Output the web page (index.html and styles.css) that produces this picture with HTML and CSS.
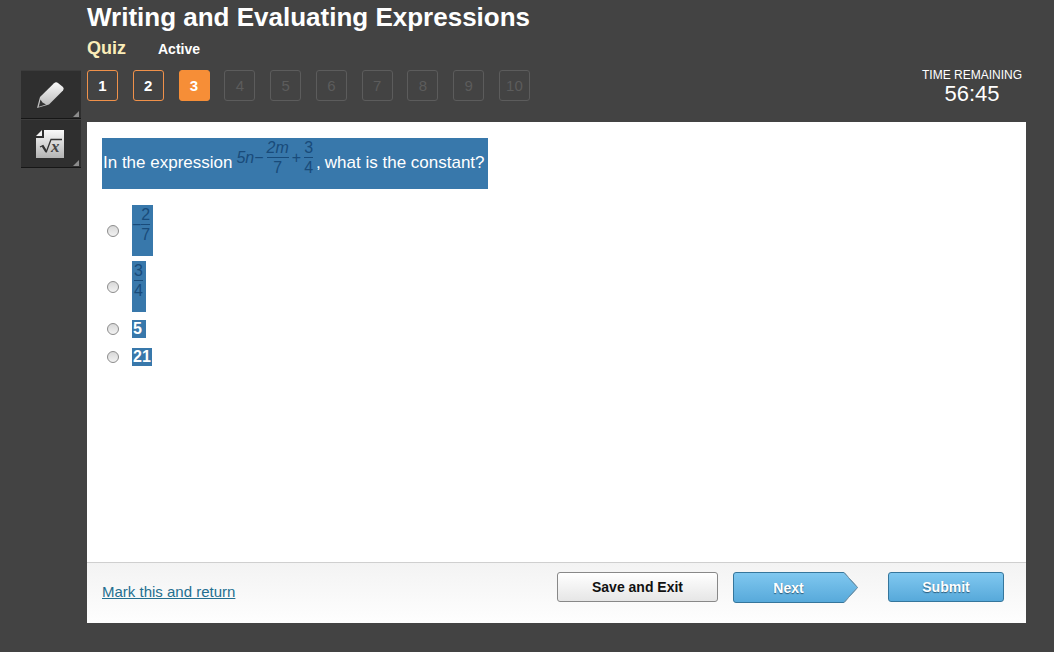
FILE: index.html
```html
<!DOCTYPE html>
<html lang="en">
<head>
<meta charset="utf-8">
<title>Writing and Evaluating Expressions</title>
<link rel="stylesheet" href="styles.css">
</head>
<body>
<div class="page">
  <aside class="tools">
    <button class="tool" type="button" aria-label="Highlighter">
      <svg width="32" height="32" viewBox="0 0 32 32">
        <defs><linearGradient id="metal" x1="0" y1="0" x2="0" y2="1"><stop offset="0" stop-color="#fafafa"/><stop offset="1" stop-color="#b4b4b4"/></linearGradient></defs>
        <path d="M2 29 5 18 19 4.200Q21 2.500 23 4L28 8Q29.500 9.500 28 11.500L14 25.500Z" fill="url(#metal)"/>
        <path d="M5.500 20.500 7.500 23.500 11 25.500 3.800 27.800Z" fill="#333"/>
      </svg>
    </button>
    <button class="tool" type="button" aria-label="Equation editor">
      <svg width="32" height="32" viewBox="0 0 32 32">
        <path d="M9 2H29V30H1V10H9Z" fill="url(#metal)"/>
        <path d="M1 8 7 2V8Z" fill="#f4f4f4"/>
        <path d="M5 19 8 17.500 11.500 23.500 16 11.500H27" fill="none" stroke="#333" stroke-width="1.300"/>
        <path d="M7.500 18 11.300 24" stroke="#333" stroke-width="2"/>
        <text class="radicand" x="16" y="24">x</text>
      </svg>
    </button>
  </aside>

  <header class="header">
    <div>
      <h1 class="title">Writing and Evaluating Expressions</h1>
      <p class="meta"><span class="kind">Quiz</span><span class="status">Active</span></p>
      <nav class="steps" aria-label="Questions">
        <button class="step visited" type="button">1</button>
        <button class="step visited" type="button">2</button>
        <button class="step current" type="button" aria-current="step">3</button>
        <button class="step" type="button" disabled>4</button>
        <button class="step" type="button" disabled>5</button>
        <button class="step" type="button" disabled>6</button>
        <button class="step" type="button" disabled>7</button>
        <button class="step" type="button" disabled>8</button>
        <button class="step" type="button" disabled>9</button>
        <button class="step" type="button" disabled>10</button>
      </nav>
    </div>
    <div class="timer"><span class="timer-label">TIME REMAINING</span><span class="timer-value">56:45</span></div>
  </header>

  <main class="card">
    <section class="body">
      <div class="question marked" id="question">
        <span>In the expression</span>
        <span class="math"><span><i>5n</i>−</span><span class="frac"><i>2m</i><span class="den">7</span></span><span>+</span><span class="frac"><span>3</span><span class="den">4</span></span></span>
        <span class="comma">,</span>
        <span>what is the constant?</span>
      </div>
      <div class="options" role="radiogroup" aria-labelledby="question">
        <div class="option"><input class="radio" type="radio" name="answer" id="a1"><label class="marked answer wide" for="a1"><span class="math tight"><span>−</span><span class="frac"><span>2</span><span class="den">7</span></span></span></label></div>
        <div class="option"><input class="radio" type="radio" name="answer" id="a2"><label class="marked answer" for="a2"><span class="math tight"><span class="frac"><span>3</span><span class="den">4</span></span></span></label></div>
        <div class="option"><input class="radio" type="radio" name="answer" id="a3"><label class="marked plain" for="a3">5</label></div>
        <div class="option"><input class="radio" type="radio" name="answer" id="a4"><label class="marked plain" for="a4">21</label></div>
      </div>
    </section>
    <footer class="footer">
      <a class="mark" href="#">Mark this and return</a>
      <button class="btn save" type="button">Save and Exit</button>
      <button class="btn next" type="button">
        <svg class="next-shape" width="126" height="32" viewBox="0 0 126 32">
          <defs><linearGradient id="sky" x1="0" y1="0" x2="0" y2="1"><stop offset="0" stop-color="#80c8f0"/><stop offset="1" stop-color="#57a9da"/></linearGradient></defs>
          <path d="M3 .5H111L124.500 15.500 111 30.500H3Q.5 30.500 .5 28V3Q.5 .5 3 .5Z" fill="url(#sky)" stroke="#35769c"/>
          <path d="M111 .5 124.500 15.500 111 30.500" fill="none" stroke="#7a99ad"/>
        </svg>
        <span class="next-text">Next</span>
      </button>
      <button class="btn submit" type="button">Submit</button>
    </footer>
  </main>
</div>
</body>
</html>
```
FILE: styles.css
```css
* { box-sizing: border-box; }
body {
  margin: 0;
  background: #434343;
  color: #fff;
  font-family: "Liberation Sans", Arial, sans-serif;
}
button { font-family: inherit; cursor: pointer; }
.page {
  display: grid;
  grid-template-columns: 60px 1fr;
  grid-template-rows: auto 1fr;
  column-gap: 6px;
  min-height: 100vh;
  padding: 0 28px 29px 21px;
}
.tools {
  grid-row: 1 / 3;
  padding-top: 70px;
}
.tool {
  position: relative;
  display: flex;
  align-items: center;
  justify-content: center;
  width: 60px;
  height: 49px;
  padding: 0;
  border: 0;
  border-top: 1px solid #3c3c3c;
  border-bottom: 1px solid #161616;
  background: #2f2f2f;
}
.tool::after {
  content: "";
  position: absolute;
  right: 2px;
  bottom: 1px;
  border: 3px solid transparent;
  border-right-color: #8c8c8c;
  border-bottom-color: #8c8c8c;
}
.radicand {
  font: italic bold 17px "Liberation Serif", serif;
  fill: #444;
}
.header {
  display: flex;
  justify-content: space-between;
  padding: 0 4px 17px 0;
}
.title {
  margin: 0;
  font-size: 26px;
  line-height: 35px;
}
.meta {
  display: flex;
  align-items: baseline;
  gap: 32px;
  margin: 0 0 8px;
  line-height: 26px;
  font-weight: bold;
}
.kind { color: #fbedb9; font-size: 18px; }
.status { font-size: 14px; }
.steps {
  display: flex;
  justify-content: space-between;
  width: 443px;
}
.step {
  width: 31px;
  height: 31px;
  padding: 0;
  border: 1px solid #5c5c5c;
  border-radius: 3px;
  background: transparent;
  color: #5c5c5c;
  font-size: 15px;
}
.step.visited { border-color: #f0914a; color: #fff; font-weight: bold; }
.step.current { border-color: #f68e37; background: #f68e37; color: #fff; font-weight: bold; }
.timer {
  display: flex;
  flex-direction: column;
  align-items: center;
  padding-top: 67px;
}
.timer-label { font-size: 12px; line-height: 16px; }
.timer-value { font-size: 22px; line-height: 22px; }
.card {
  display: flex;
  flex-direction: column;
  background: #fff;
}
.body {
  flex: 1;
  padding: 16px 15px;
}
.marked { background: #3878ab; color: #fff; }
.question {
  display: inline-flex;
  align-items: center;
  min-height: 51px;
  padding: 0 3px 2px 1px;
  font-size: 17px;
}
.math {
  display: inline-flex;
  align-items: center;
  align-self: flex-start;
  gap: 3px;
  padding-left: 4px;
  color: #194b7a;
  font-size: 16px;
  line-height: 19px;
}
.tight { gap: 0; padding-left: 0; }
.frac {
  display: inline-flex;
  flex-direction: column;
  text-align: center;
}
.den { border-top: 1px solid #194b7a; }
.comma { padding: 0 4px 0 3px; }
.options {
  display: flex;
  flex-direction: column;
  gap: 5px;
  margin-top: 16px;
}
.option {
  display: flex;
  align-items: center;
  gap: 13px;
  min-height: 23px;
  padding-left: 5px;
}
.radio {
  appearance: none;
  width: 12px;
  height: 12px;
  margin: 0;
  border: 1px solid #8c8c8c;
  border-radius: 50%;
  background: linear-gradient(#d8d8d8, #f2f2f2);
}
.radio:checked { background: #555; }
.answer {
  display: flex;
  align-items: flex-start;
  min-height: 51px;
  padding: 0 3px 0 2px;
}
.wide { padding: 0 3px 0 0; }
.plain {
  min-width: 14px;
  font-size: 16px;
  font-weight: bold;
  line-height: 18px;
  padding: 0 1px;
}
.footer {
  display: flex;
  align-items: flex-start;
  min-height: 61px;
  padding: 9px 22px 0 15px;
  border-top: 1px solid #cfcfcf;
  background: linear-gradient(#f3f3f3, #fefefe);
}
.mark {
  margin-right: auto;
  color: #246f90;
  font-size: 15px;
  line-height: 40px;
}
.btn {
  height: 30px;
  padding: 0;
  border: 1px solid #35769c;
  border-radius: 3px;
  background: linear-gradient(#80c8f0, #57a9da);
  color: #fff;
  font-size: 14px;
  font-weight: bold;
  text-shadow: 0 1px 1px #2b5a78;
}
.save {
  width: 161px;
  margin-right: 15px;
  border-color: #888;
  background: linear-gradient(#fff, #e6e6e6);
  color: #111;
  text-shadow: none;
}
.next {
  position: relative;
  width: 126px;
  height: 32px;
  margin-right: 29px;
  padding-right: 15px;
  border: 0;
  background: none;
}
.next-shape { position: absolute; top: 0; left: 0; }
.next-text { position: relative; }
.submit { width: 116px; }
```
